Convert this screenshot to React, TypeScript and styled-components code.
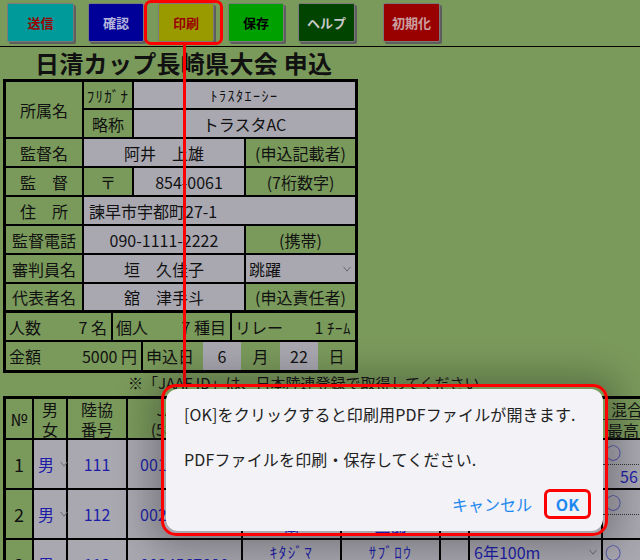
import React from 'react';
import styled, { createGlobalStyle } from 'styled-components';

const GREEN = '#7a9a5b';
const GRAY = '#a9a8b1';
const BLUE = '#1c1ca8';
const RED = '#ff0000';

const Global = createGlobalStyle`
  html, body { margin: 0; padding: 0; background: ${GREEN}; }
  body { font-family: "Noto Sans CJK JP", "Liberation Sans", sans-serif; color: #111; }
`;

const Page = styled.div`
  position: relative;
  width: 640px;
  height: 560px;
  overflow: hidden;
  background: ${GREEN};
`;

/* ---------- toolbar ---------- */
const Toolbar = styled.div`
  display: flex;
  align-items: flex-start;
  gap: 14px;
  height: 47px;
  box-sizing: border-box;
  padding: 3px 0 0 7px;
  border-bottom: 1px solid #000;
`;

const ToolButton = styled.button<{ $bg: string; $fg: string; $w: number }>`
  width: ${(p) => p.$w}px;
  height: 39px;
  flex: none;
  background: ${(p) => p.$bg};
  color: ${(p) => p.$fg};
  border: 1px solid #7a7a7a;
  border-radius: 2px;
  box-shadow: 2px 2px 0 #5e5e5e;
  font-family: inherit;
  font-size: 13px;
  font-weight: 700;
  padding: 0;
`;

const Spacer = styled.div<{ $w: number }>`
  width: ${(p) => p.$w}px;
  flex: none;
`;

const Title = styled.h1`
  margin: 0;
  height: 32px;
  line-height: 32px;
  padding-left: 35px;
  font-size: 24px;
  font-weight: 700;
  color: #111;
  letter-spacing: 0.3px;
`;

/* ---------- form table ---------- */
const FormBox = styled.div`
  margin-left: 3px;
  width: 355px;
  border: 3px solid #000;
  box-sizing: border-box;
`;

const Row = styled.div<{ $h: number; $bb?: number }>`
  display: flex;
  height: ${(p) => p.$h}px;
  box-sizing: border-box;
  border-bottom: ${(p) => (p.$bb === 0 ? 'none' : `${p.$bb ?? 2}px solid #000`)};
`;

const Stack = styled.div`
  flex: 1;
  display: flex;
  flex-direction: column;
`;

const justify = {
  left: 'flex-start',
  center: 'center',
  right: 'flex-end',
  between: 'space-between',
} as const;

const Cell = styled.div<{
  $w?: number;
  $gray?: boolean;
  $align?: keyof typeof justify;
  $last?: boolean;
  $pl?: number;
}>`
  box-sizing: border-box;
  ${(p) => (p.$w ? `width:${p.$w}px; flex:none;` : 'flex:1;')}
  height: 100%;
  display: flex;
  align-items: center;
  justify-content: ${(p) => justify[p.$align || 'center']};
  background: ${(p) => (p.$gray ? GRAY : GREEN)};
  border-right: ${(p) => (p.$last ? 'none' : '2px solid #000')};
  font-size: 16px;
  padding: 0 ${(p) => (p.$align === 'between' ? 4 : 2)}px 0 ${(p) => p.$pl ?? 2}px;
  white-space: nowrap;
  gap: 4px;
`;

const HalfKana = styled.span<{ $size?: number; $ls?: number }>`
  font-size: ${(p) => p.$size ?? 14}px;
  letter-spacing: ${(p) => p.$ls ?? 1.5}px;
`;

const Chevron = styled.svg`
  flex: none;
`;

const Chev = () => (
  <Chevron viewBox="0 0 8 6" width="8" height="6">
    <polyline points="0.5,0.8 4,5.2 7.5,0.8" fill="none" stroke="#6a6a6a" strokeWidth="1" />
  </Chevron>
);

const Num = styled.span``;

/* ---------- note ---------- */
const Note = styled.div`
  height: 23px;
  line-height: 20px;
  padding-left: 128px;
  font-size: 15px;
  white-space: nowrap;
  color: #111;
`;

/* ---------- lower table ---------- */
const LTable = styled.div`
  margin-left: 3px;
  width: 740px;
  border-top: 3px solid #000;
  border-left: 3px solid #000;
  box-sizing: border-box;
`;

const LCell = styled.div<{ $w: number; $gray?: boolean; $align?: keyof typeof justify; $pl?: number }>`
  box-sizing: border-box;
  width: ${(p) => p.$w}px;
  flex: none;
  height: 100%;
  display: flex;
  flex-direction: column;
  justify-content: center;
  align-items: ${(p) => justify[p.$align || 'center']};
  background: ${(p) => (p.$gray ? GRAY : GREEN)};
  border-right: 2px solid #000;
  font-size: 16px;
  line-height: 20px;
  text-align: center;
  padding-left: ${(p) => p.$pl ?? 0}px;
  white-space: nowrap;
  color: #111;
`;

const Inline = styled.div<{ $blue?: boolean; $size?: number }>`
  display: flex;
  align-items: center;
  gap: 6px;
  color: ${(p) => (p.$blue ? BLUE : '#111')};
  font-size: ${(p) => p.$size ?? 16}px;
`;

const SubStack = styled.div`
  width: 100%;
  height: 100%;
  display: flex;
  flex-direction: column;
`;

const SubCell = styled.div<{ $line?: 'solid' | 'dotted'; $align?: keyof typeof justify; $pl?: number; $pr?: number }>`
  flex: 1;
  display: flex;
  align-items: center;
  justify-content: ${(p) => justify[p.$align || 'center']};
  padding: 0 ${(p) => p.$pr ?? 0}px 0 ${(p) => p.$pl ?? 0}px;
  border-bottom: ${(p) => (p.$line ? `1px ${p.$line} #333` : 'none')};
  color: ${BLUE};
  font-size: 16px;
  box-sizing: border-box;
`;

/* ---------- overlays ---------- */
const Highlight = styled.div`
  position: absolute;
  left: 144px;
  top: 0;
  width: 79px;
  height: 45px;
  box-sizing: border-box;
  border: 3px solid ${RED};
  border-radius: 7px;
`;

const Connector = styled.div`
  position: absolute;
  left: 183px;
  top: 44px;
  width: 3px;
  height: 342px;
  background: ${RED};
`;

const DialogFrame = styled.div`
  position: absolute;
  left: 161px;
  top: 384px;
  border: 3px solid ${RED};
  border-radius: 15px;
  padding: 2px;
  box-shadow: 0 2px 34px 12px rgba(30, 30, 30, 0.32);
`;

const Dialog = styled.div`
  width: 437px;
  height: 142px;
  box-sizing: border-box;
  background: #f2f2f7;
  border-radius: 12px;
  padding: 13px 12px 0 18px;
  display: flex;
  flex-direction: column;
`;

const DialogText = styled.p<{ $mt?: number }>`
  margin: ${(p) => p.$mt ?? 0}px 0 0;
  font-size: 16px;
  line-height: 24px;
  color: #222;
  white-space: nowrap;
  letter-spacing: 0.15px;
`;

const DialogActions = styled.div`
  margin-top: 18px;
  display: flex;
  justify-content: flex-end;
  align-items: center;
  gap: 12px;
`;

const DialogButton = styled.button<{ $primary?: boolean }>`
  background: none;
  border: ${(p) => (p.$primary ? `3px solid ${RED}` : 'none')};
  border-radius: 6px;
  height: 30px;
  width: ${(p) => (p.$primary ? '47px' : 'auto')};
  padding: 0;
  font-family: inherit;
  font-size: 16px;
  font-weight: ${(p) => (p.$primary ? 700 : 400)};
  color: #1e88f0;
  box-sizing: border-box;
`;

const COLS = [28, 34, 60, 115, 99, 99, 29, 133, 140];

type Entry = {
  no: string;
  sex: string;
  code: string;
  id: string;
  kanaSei: string;
  kanaMei: string;
  sei: string;
  mei: string;
  event: string;
  best?: string;
};

const entries: Entry[] = [
  { no: '1', sex: '男', code: '111', id: '0012345678', kanaSei: 'ﾄﾗｽﾀ', kanaMei: 'ｲﾁﾛｳ', sei: '虎須田', mei: '一郎', event: '5年100m', best: '56' },
  { no: '2', sex: '男', code: '112', id: '0023456789', kanaSei: 'ﾐﾅﾐ', kanaMei: 'ｼﾞﾛｳ', sei: '南', mei: '二郎', event: '5年走幅跳', best: '' },
  { no: '3', sex: '男', code: '113', id: '0034567890', kanaSei: 'ｷﾀｼﾞﾏ', kanaMei: 'ｻﾌﾞﾛｳ', sei: '北島', mei: '三郎', event: '6年100m', best: '' },
];

export default function App() {
  return (
    <Page>
      <Global />
      <Toolbar>
        <ToolButton $bg="#009a9a" $fg="#9a0000" $w={67}>送信</ToolButton>
        <ToolButton $bg="#000099" $fg="#b4b4dc" $w={56}>確認</ToolButton>
        <ToolButton $bg="#999900" $fg="#9a0000" $w={56}>印刷</ToolButton>
        <ToolButton $bg="#00a000" $fg="#000" $w={56}>保存</ToolButton>
        <ToolButton $bg="#004400" $fg="#c8c8c8" $w={57}>ヘルプ</ToolButton>
        <Spacer $w={0} />
        <ToolButton $bg="#990000" $fg="#caa0a0" $w={57}>初期化</ToolButton>
      </Toolbar>

      <Title>日清カップ長崎県大会 申込</Title>

      <FormBox>
        <Row $h={57}>
          <Cell $w={78}>所属名</Cell>
          <Stack>
            <Row $h={28}>
              <Cell $w={50}><HalfKana $size={15} $ls={1.2}>ﾌﾘｶﾞﾅ</HalfKana></Cell>
              <Cell $gray $last><HalfKana $size={14} $ls={1.5}>ﾄﾗｽﾀｴｰｼｰ</HalfKana></Cell>
            </Row>
            <Row $h={27} $bb={0}>
              <Cell $w={50}>略称</Cell>
              <Cell $gray $last>トラスタAC</Cell>
            </Row>
          </Stack>
        </Row>
        <Row $h={29}>
          <Cell $w={78}>監督名</Cell>
          <Cell $w={162} $gray>阿井　上雄</Cell>
          <Cell $last>(申込記載者)</Cell>
        </Row>
        <Row $h={29}>
          <Cell $w={78}>監　督</Cell>
          <Cell $w={50}>〒</Cell>
          <Cell $w={112} $gray>854-0061</Cell>
          <Cell $last>(7桁数字)</Cell>
        </Row>
        <Row $h={29}>
          <Cell $w={78}>住　所</Cell>
          <Cell $gray $last $align="left" $pl={5}>諫早市宇都町27-1</Cell>
        </Row>
        <Row $h={29}>
          <Cell $w={78}>監督電話</Cell>
          <Cell $w={162} $gray>090-1111-2222</Cell>
          <Cell $last>(携帯)</Cell>
        </Row>
        <Row $h={29}>
          <Cell $w={78}>審判員名</Cell>
          <Cell $w={162} $gray>垣　久佳子</Cell>
          <Cell $gray $last $align="between" $pl={3}>
            <span>跳躍</span>
            <Chev />
          </Cell>
        </Row>
        <Row $h={29} $bb={3}>
          <Cell $w={78}>代表者名</Cell>
          <Cell $w={162} $gray>舘　津手斗</Cell>
          <Cell $last>(申込責任者)</Cell>
        </Row>
        <Row $h={29}>
          <Cell $w={107} $align="between" $pl={3}>
            <span>人数</span>
            <Num>7 名</Num>
          </Cell>
          <Cell $w={119} $align="between" $pl={3}>
            <span>個人</span>
            <Num>7 種目</Num>
          </Cell>
          <Cell $last $align="between" $pl={3}>
            <span>リレー</span>
            <Num>1 <HalfKana $size={15} $ls={0.5}>ﾁｰﾑ</HalfKana></Num>
          </Cell>
        </Row>
        <Row $h={28} $bb={0}>
          <Cell $w={137} $align="between" $pl={3}>
            <span>金額</span>
            <Num>5000 円</Num>
          </Cell>
          <Cell $w={60} $align="left" $pl={3} $last>申込日</Cell>
          <Cell $w={38} $gray $last>6</Cell>
          <Cell $w={39} $last>月</Cell>
          <Cell $w={38} $gray $last>22</Cell>
          <Cell $last>日</Cell>
        </Row>
      </FormBox>

      <Note>※「JAAF ID」は、日本陸連登録で取得してください</Note>

      <LTable>
        <Row $h={41}>
          <LCell $w={COLS[0]}><Inline $size={17}>№</Inline></LCell>
          <LCell $w={COLS[1]}>男<br />女</LCell>
          <LCell $w={COLS[2]}>陸協<br />番号</LCell>
          <LCell $w={COLS[3]}>JAAF ID<br />(5桁以上)</LCell>
          <LCell $w={COLS[4]}>フリガナ<br />姓</LCell>
          <LCell $w={COLS[5]}>フリガナ<br />名</LCell>
          <LCell $w={COLS[6]}>学<br />年</LCell>
          <LCell $w={COLS[7]}>種目<br />記録</LCell>
          <LCell $w={COLS[8]} $align="left">
            <SubStack>
              <SubCell $line="solid" $align="left" $pl={8}><Inline>混合</Inline></SubCell>
              <SubCell $align="left" $pl={4}><Inline>最高</Inline></SubCell>
            </SubStack>
          </LCell>
        </Row>
        {entries.map((e) => (
          <Row $h={50} key={e.no}>
            <LCell $w={COLS[0]}><Inline $size={18}>{e.no}</Inline></LCell>
            <LCell $w={COLS[1]} $gray $align="left" $pl={4}>
              <Inline $blue>{e.sex}<Chev /></Inline>
            </LCell>
            <LCell $w={COLS[2]} $gray><Inline $blue>{e.code}</Inline></LCell>
            <LCell $w={COLS[3]} $gray><Inline $blue>{e.id}</Inline></LCell>
            <LCell $w={COLS[4]} $gray>
              <SubStack>
                <SubCell><HalfKana $size={15}>{e.kanaSei}</HalfKana></SubCell>
                <SubCell>{e.sei}</SubCell>
              </SubStack>
            </LCell>
            <LCell $w={COLS[5]} $gray>
              <SubStack>
                <SubCell><HalfKana $size={15}>{e.kanaMei}</HalfKana></SubCell>
                <SubCell>{e.mei}</SubCell>
              </SubStack>
            </LCell>
            <LCell $w={COLS[6]} $gray />
            <LCell $w={COLS[7]} $gray>
              <SubStack>
                <SubCell $align="between" $pl={4} $pr={4}>
                  <span>{e.event}</span>
                  <Chev />
                </SubCell>
                <SubCell $align="between" $pl={4} $pr={4}>
                  <span />
                  <Chev />
                </SubCell>
              </SubStack>
            </LCell>
            <LCell $w={COLS[8]} $gray>
              <SubStack>
                <SubCell $line="dotted" $align="left" $pl={2}>○</SubCell>
                <SubCell $align="left" $pl={17}>{e.best}</SubCell>
              </SubStack>
            </LCell>
          </Row>
        ))}
      </LTable>

      <Highlight />
      <Connector />
      <DialogFrame>
        <Dialog>
          <DialogText>[OK]をクリックすると印刷用PDFファイルが開きます.</DialogText>
          <DialogText $mt={21}>PDFファイルを印刷・保存してください.</DialogText>
          <DialogActions>
            <DialogButton>キャンセル</DialogButton>
            <DialogButton $primary>OK</DialogButton>
          </DialogActions>
        </Dialog>
      </DialogFrame>
    </Page>
  );
}
